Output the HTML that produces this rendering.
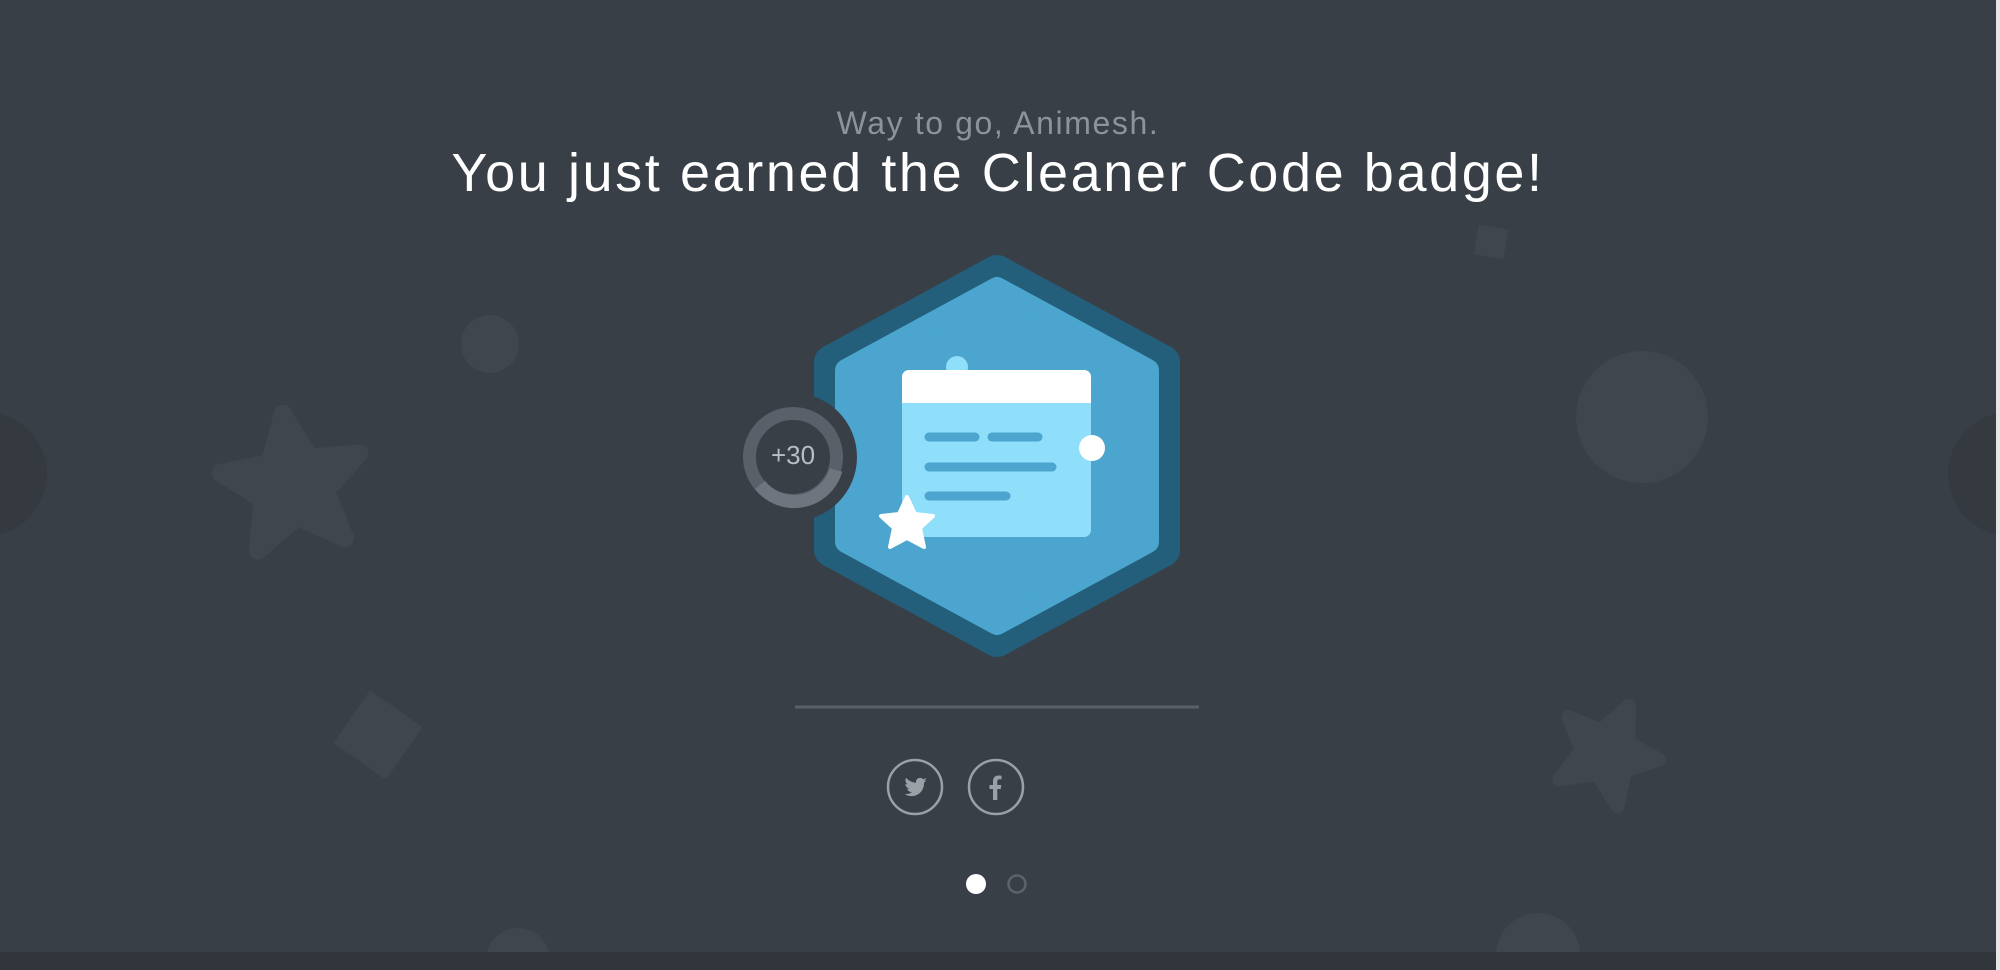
<!DOCTYPE html>
<html><head><meta charset="utf-8"><style>
html,body{margin:0;padding:0;width:2000px;height:970px;overflow:hidden;background:#393f46;font-family:"Liberation Sans",sans-serif;}
.t{position:absolute;left:0;width:1996px;text-align:center;}
</style></head><body>
<svg width="2000" height="970" style="position:absolute;left:0;top:0">
<rect width="2000" height="970" fill="#393f46"/>
<g fill="#40464e">
<circle cx="490" cy="344" r="29"/>
<circle cx="1642" cy="417" r="66"/>
<circle cx="1538" cy="955" r="42"/>
<circle cx="518" cy="960" r="32"/>
<rect x="346" y="703" width="64" height="64" transform="rotate(35 378 735)"/>
<rect x="1476" y="227" width="30" height="30" transform="rotate(10 1491 242)"/>
<polygon transform="translate(293,485) rotate(-8)" points="0,-72 20,-25 70,-22 32,10 44,60 0,32 -44,60 -32,10 -70,-22 -20,-25" stroke="#40464e" stroke-width="18" stroke-linejoin="round"/>
<polygon transform="translate(1607,753) rotate(25)" points="0,-52 15,-18 50,-16 24,8 32,44 0,23 -32,44 -24,8 -50,-16 -15,-18" stroke="#40464e" stroke-width="14" stroke-linejoin="round"/>
</g>
<circle cx="-15" cy="474" r="62" fill="#353a41"/>
<circle cx="2010" cy="474" r="62" fill="#353a41"/>
<rect x="0" y="952" width="2000" height="18" fill="#31363c"/>
<rect x="1996" y="0" width="4" height="970" fill="#e6e6e6"/>
<!-- badge -->
<polygon points="997,272 1163,362 1163,550 997,640 831,550 831,362" fill="#235e7b" stroke="#235e7b" stroke-width="34" stroke-linejoin="round"/>
<polygon points="997,288 1148,370 1148,542 997,624 846,542 846,370" fill="#4ba5cf" stroke="#4ba5cf" stroke-width="22" stroke-linejoin="round"/>
<circle cx="957" cy="367" r="11" fill="#8fdefa"/>
<rect x="902" y="370" width="189" height="167" rx="7" fill="#8fdefa"/>
<path d="M902,403 V377 a7,7 0 0 1 7,-7 H1084 a7,7 0 0 1 7,7 V403 Z" fill="#fff"/>
<g stroke="#4ba5cf" stroke-width="9" stroke-linecap="round">
<line x1="929" y1="437" x2="975" y2="437"/>
<line x1="992" y1="437" x2="1038" y2="437"/>
<line x1="929" y1="467" x2="1052" y2="467"/>
<line x1="929" y1="496" x2="1006" y2="496"/>
</g>
<circle cx="1092" cy="448" r="13" fill="#fff"/>
<polygon transform="translate(907,524)" points="0,-27 8,-10 26,-8 13,4 17,23 0,14 -17,23 -13,4 -26,-8 -8,-10" fill="#fff" stroke="#fff" stroke-width="4" stroke-linejoin="round"/>
<circle cx="793" cy="457" r="64" fill="#393f46"/>
<circle cx="793" cy="457" r="43.5" fill="none" stroke="#59606a" stroke-width="13"/>
<path d="M836,470 A43.5,43.5 0 0 1 760,485" fill="none" stroke="#6e757f" stroke-width="13"/>
<line x1="795" y1="707" x2="1199" y2="707" stroke="#5a5f68" stroke-width="3"/>
<circle cx="915" cy="787" r="27" fill="none" stroke="#9aa0a6" stroke-width="2.5"/>
<circle cx="996" cy="787" r="27" fill="none" stroke="#9aa0a6" stroke-width="2.5"/>
<path transform="translate(903,777)" fill="#9aa0a6" d="M24,3 c-1,.5 -2,.7 -3,.8 c1,-.6 2,-1.6 2.3,-2.8 c-1,.6 -2,1 -3.2,1.2 c-2,-2.2 -5.6,-1.6 -6.8,1 c-.3,.8 -.4,1.7 -.2,2.5 c-4,-.2 -7.6,-2 -10,-5 c-1.3,2.3 -.6,5.2 1.6,6.6 c-.8,0 -1.6,-.2 -2.3,-.6 c0,2.4 1.7,4.4 4,4.9 c-.7,.2 -1.500,.2 -2.2,.1 c.6,2 2.5,3.4 4.6,3.4 c-2,1.6 -4.6,2.3 -7.1,2 c8.5,5.4 19.7,-.4 19.3,-11.5 c1,-.7 1.8,-1.5 2.4,-2.4 z"/>
<path fill="#9aa0a6" d="M993,800 V789 H989.5 V785 H993 V781.5 C993,777.5 995,775.5 998.5,775.5 C1000,775.5 1001.5,775.7 1001.5,775.7 V779.2 H999.7 C998,779.2 997.3,780 997.3,781.5 V785 H1001.3 L1000.7,789 H997.3 V800 Z"/>
<circle cx="976" cy="884" r="10" fill="#fff"/>
<circle cx="1017" cy="884" r="8.5" fill="none" stroke="#5c636b" stroke-width="2.5"/>
</svg>
<div class="t" style="top:105px;font-size:32px;color:#8c939b;letter-spacing:1.6px">Way to go, Animesh.</div>
<div class="t" style="top:142px;font-size:54px;color:#fff;letter-spacing:2.6px">You just earned the Cleaner Code badge!</div>
<div style="position:absolute;left:743px;top:440px;width:100px;text-align:center;font-size:26px;color:#b9bec4">+30</div>
</body></html>
